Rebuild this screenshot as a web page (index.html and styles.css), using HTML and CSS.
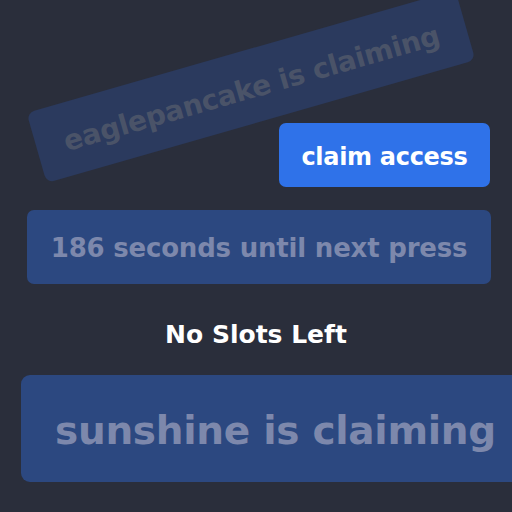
FILE: index.html
```html
<!DOCTYPE html>
<html lang="en">
<head>
    <meta charset="UTF-8">
    <meta name="viewport" content="width=device-width, initial-scale=1.0">
    <title>Claim Access</title>
    <link rel="stylesheet" href="styles.css">
</head>
<body>
    <div class="stage">
        <div class="claim-banner">eaglepancake is claiming</div>

        <div class="action-row">
            <button class="claim-button">claim access</button>
        </div>

        <div class="cooldown">186 seconds until next press</div>

        <h2 class="slots">No Slots Left</h2>

        <div class="claim-current">sunshine is claiming</div>
    </div>
</body>
</html>
```

FILE: styles.css
```css
* {
    margin: 0;
    padding: 0;
    box-sizing: border-box;
}

body {
    font-family: "DejaVu Sans", "Noto Sans", sans-serif;
    font-weight: 700;
    background-color: #2a2e3b;
    width: 512px;
    height: 512px;
    overflow: hidden;
}

.stage {
    display: flex;
    flex-direction: column;
    padding-top: 50px;
}

/* faded, tilted notice behind the button */
.claim-banner {
    width: 446px;
    height: 73px;
    margin-left: 28px;
    padding-top: 4px;
    border-radius: 8px;
    background: #2b3a5e;
    color: #4a5368;
    font-size: 28px;
    letter-spacing: -0.3px;
    display: flex;
    align-items: center;
    justify-content: center;
    transform: rotate(-16deg);
}

.action-row {
    display: flex;
    justify-content: flex-end;
    padding-right: 22px;
    position: relative;
}

.claim-button {
    width: 211px;
    height: 64px;
    padding-top: 3px;
    border: none;
    border-radius: 7px;
    background: #2f72e9;
    color: #fff;
    font-family: inherit;
    font-weight: 700;
    font-size: 24px;
    letter-spacing: -0.3px;
    cursor: pointer;
}

.cooldown {
    margin: 23px 21px 0 27px;
    height: 74px;
    padding-top: 2px;
    border-radius: 7px;
    background: #2c4880;
    color: #7d88ac;
    font-size: 26px;
    letter-spacing: -0.2px;
    display: flex;
    align-items: center;
    justify-content: center;
}

.slots {
    margin-top: 36px;
    text-align: center;
    color: #fff;
    font-size: 25px;
    line-height: 30px;
}

.claim-current {
    margin: 25px 0 0 21px;
    height: 107px;
    padding-top: 3px;
    border-radius: 9px 0 0 9px;
    background: #2c4880;
    color: #7d88ac;
    font-size: 39px;
    letter-spacing: -0.3px;
    display: flex;
    align-items: center;
    padding-left: 34px;
}
```
